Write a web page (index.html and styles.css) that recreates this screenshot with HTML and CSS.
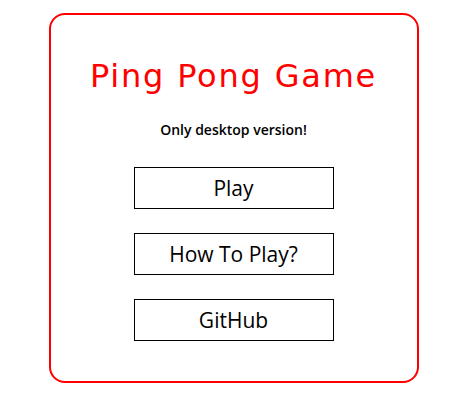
FILE: index.html
```html
<!DOCTYPE html>
<html>
<head>
<meta charset="utf-8">
<link rel="stylesheet" href="styles.css">
</head>
<body>
<div class="card">
  <h1 class="title">Ping Pong Game</h1>
  <p class="note">Only desktop version!</p>
  <div class="menu">
    <button class="btn">Play</button>
    <button class="btn">How To Play?</button>
    <button class="btn">GitHub</button>
  </div>
</div>
</body>
</html>
```
FILE: styles.css
```css
html, body { margin: 0; padding: 0; background: #fff; }
body {
  display: flex;
  justify-content: center;
  padding-top: 13px;
}
.card {
  box-sizing: border-box;
  width: 370px;
  height: 370px;
  border: 2px solid #ff0000;
  border-radius: 16px;
  display: flex;
  flex-direction: column;
  align-items: center;
}
.title {
  margin: 43px 0 0;
  font-family: "DejaVu Sans", sans-serif;
  font-weight: 400;
  font-size: 32px;
  line-height: 36px;
  letter-spacing: 1.8px;
  color: #ff0000;
}
.note {
  margin: 27px 0 0;
  font-family: "Open Sans", sans-serif;
  font-weight: 600;
  font-size: 14px;
  line-height: 18px;
  color: #000;
}
.menu {
  margin-top: 28px;
  display: flex;
  flex-direction: column;
  gap: 24px;
}
.btn {
  box-sizing: border-box;
  width: 200px;
  height: 42px;
  border: 1px solid #000;
  background: #fff;
  font-family: "Open Sans", sans-serif;
  font-weight: 400;
  font-size: 21px;
  color: #000;
  padding: 0;
}
```
